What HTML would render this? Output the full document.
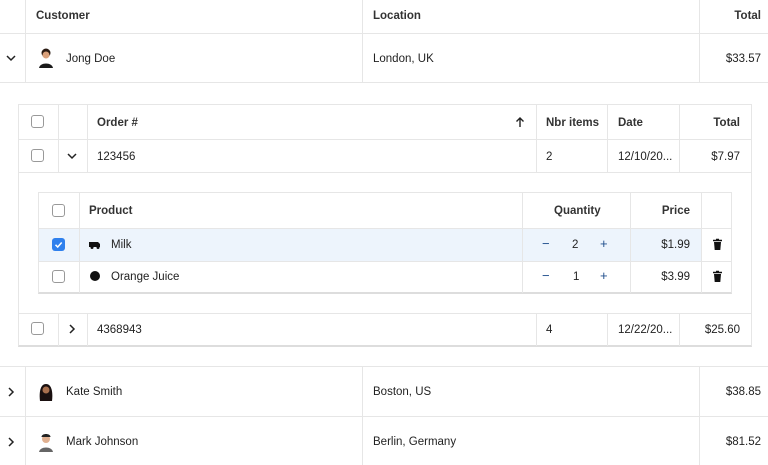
<!DOCTYPE html>
<html><head><style>
*{box-sizing:border-box;margin:0;padding:0}
body{width:768px;height:465px;overflow:hidden;background:#fff;font-family:"Liberation Sans",sans-serif;font-size:11.5px;color:#222;position:relative}
.a{position:absolute}
.h{position:absolute;background:#e6e6e6;height:1px}
.v{position:absolute;background:#e6e6e6;width:1px}
.t{position:absolute;white-space:nowrap;line-height:14px;margin-top:1px}
.b{font-weight:bold;color:#333}
.cb{position:absolute;width:13px;height:13px;border:1px solid #999;border-radius:3px;background:#fff}
.r{text-align:right}
.q{color:#1f4e8c;font-size:13px}
</style></head><body>
<div class="h" style="left:0;top:33px;width:768px"></div>
<div class="v" style="left:25px;top:0;height:82px"></div>
<div class="v" style="left:362px;top:0;height:82px"></div>
<div class="v" style="left:699px;top:0;height:82px"></div>
<div class="t b" style="left:36px;top:8px">Customer</div>
<div class="t b" style="left:373px;top:8px">Location</div>
<div class="t b r" style="right:7px;top:8px">Total</div>
<svg class="a" style="left:5px;top:53px" width="12" height="10"><path d="M2 3l4 4 4-4" stroke="#222" stroke-width="1.5" fill="none"/></svg>
<svg class="a" style="left:37px;top:47px" width="18" height="22"><circle cx="9" cy="6" r="4.5" fill="#2a1a12"/><circle cx="9" cy="8" r="3.5" fill="#d9a07a"/><path d="M2 21c1-6 13-6 14 0z" fill="#1a1a1a"/></svg>
<div class="t" style="left:66px;top:51px">Jong Doe</div>
<div class="t" style="left:373px;top:51px">London, UK</div>
<div class="t r" style="right:7px;top:51px">$33.57</div>
<div class="h" style="left:0;top:82px;width:768px"></div>
<div class="a" style="left:18px;top:104px;width:734px;height:243px;border:1px solid #e6e6e6;border-bottom:2px solid #ddd"></div>
<div class="h" style="left:18px;top:139px;width:734px"></div>
<div class="h" style="left:18px;top:172px;width:734px"></div>
<div class="h" style="left:18px;top:313px;width:734px"></div>
<div class="v" style="left:58px;top:104px;height:68px"></div>
<div class="v" style="left:87px;top:104px;height:68px"></div>
<div class="v" style="left:536px;top:104px;height:68px"></div>
<div class="v" style="left:607px;top:104px;height:68px"></div>
<div class="v" style="left:679px;top:104px;height:68px"></div>
<div class="v" style="left:58px;top:313px;height:33px"></div>
<div class="v" style="left:87px;top:313px;height:33px"></div>
<div class="v" style="left:536px;top:313px;height:33px"></div>
<div class="v" style="left:607px;top:313px;height:33px"></div>
<div class="v" style="left:679px;top:313px;height:33px"></div>
<div class="cb" style="left:31px;top:115px"></div>
<div class="t b" style="left:97px;top:115px">Order #</div>
<svg class="a" style="left:515px;top:116px" width="10" height="12"><path d="M5 11V2M1.5 5.5L5 2l3.5 3.5" stroke="#222" stroke-width="1.4" fill="none"/></svg>
<div class="t b" style="left:546px;top:115px">Nbr items</div>
<div class="t b" style="left:618px;top:115px">Date</div>
<div class="t b r" style="right:28px;top:115px">Total</div>
<div class="cb" style="left:31px;top:149px"></div>
<svg class="a" style="left:66px;top:151px" width="12" height="10"><path d="M2 3l4 4 4-4" stroke="#222" stroke-width="1.5" fill="none"/></svg>
<div class="t" style="left:97px;top:149px">123456</div>
<div class="t" style="left:546px;top:149px">2</div>
<div class="t" style="left:618px;top:149px">12/10/20...</div>
<div class="t r" style="right:28px;top:149px">$7.97</div>
<div class="cb" style="left:31px;top:322px"></div>
<svg class="a" style="left:67px;top:323px" width="10" height="12"><path d="M3 2l4 4-4 4" stroke="#222" stroke-width="1.5" fill="none"/></svg>
<div class="t" style="left:97px;top:322px">4368943</div>
<div class="t" style="left:546px;top:322px">4</div>
<div class="t" style="left:618px;top:322px">12/22/20...</div>
<div class="t r" style="right:28px;top:322px">$25.60</div>
<div class="a" style="left:38px;top:228px;width:664px;height:33px;background:#edf4fc"></div>
<div class="a" style="left:38px;top:192px;width:694px;height:102px;border:1px solid #e6e6e6;border-bottom:2px solid #ddd"></div>
<div class="h" style="left:38px;top:228px;width:694px"></div>
<div class="h" style="left:38px;top:261px;width:694px"></div>
<div class="v" style="left:79px;top:192px;height:101px"></div>
<div class="v" style="left:522px;top:192px;height:101px"></div>
<div class="v" style="left:630px;top:192px;height:101px"></div>
<div class="v" style="left:701px;top:192px;height:101px"></div>
<div class="cb" style="left:52px;top:204px"></div>
<div class="t b" style="left:89px;top:203px">Product</div>
<div class="t b" style="left:554px;top:203px">Quantity</div>
<div class="t b r" style="right:78px;top:203px">Price</div>
<div class="a" style="left:52px;top:238px;width:13px;height:13px;border-radius:3px;background:#2f80ed"></div>
<svg class="a" style="left:52px;top:238px" width="13" height="13"><path d="M3.5 6.8l2.2 2.2 4-4.5" stroke="#fff" stroke-width="1.5" fill="none"/></svg>
<svg class="a" style="left:88px;top:239px" width="14" height="10"><path d="M1 3h9l2 2v3H1z" fill="#111"/><circle cx="4" cy="8.5" r="1.5" fill="#111"/><circle cx="10" cy="8.5" r="1.5" fill="#111"/></svg>
<div class="t" style="left:111px;top:237px">Milk</div>
<div class="t q" style="left:542px;top:236px">−</div>
<div class="t" style="left:572px;top:237px">2</div>
<div class="t q" style="left:600px;top:236px">+</div>
<div class="t r" style="right:78px;top:237px">$1.99</div>
<svg class="a" style="left:712px;top:238px" width="11" height="13"><path d="M1 2.5h9M4 1.5h3" stroke="#111" stroke-width="1.5"/><path d="M2 4h7l-.7 8H2.7z" fill="#111"/></svg>
<div class="cb" style="left:52px;top:270px"></div>
<div class="a" style="left:90px;top:271px;width:10px;height:10px;border-radius:50%;background:#111"></div>
<div class="t" style="left:111px;top:269px">Orange Juice</div>
<div class="t q" style="left:542px;top:268px">−</div>
<div class="t" style="left:573px;top:269px">1</div>
<div class="t q" style="left:600px;top:268px">+</div>
<div class="t r" style="right:78px;top:269px">$3.99</div>
<svg class="a" style="left:712px;top:270px" width="11" height="13"><path d="M1 2.5h9M4 1.5h3" stroke="#111" stroke-width="1.5"/><path d="M2 4h7l-.7 8H2.7z" fill="#111"/></svg>
<div class="h" style="left:0;top:366px;width:768px"></div>
<div class="h" style="left:0;top:416px;width:768px"></div>
<div class="v" style="left:25px;top:366px;height:99px"></div>
<div class="v" style="left:362px;top:366px;height:99px"></div>
<div class="v" style="left:699px;top:366px;height:99px"></div>
<svg class="a" style="left:6px;top:386px" width="10" height="12"><path d="M3 2l4 4-4 4" stroke="#222" stroke-width="1.5" fill="none"/></svg>
<svg class="a" style="left:37px;top:381px" width="18" height="22"><path d="M3 20c-1-8 0-17 6-17s7 9 6 17z" fill="#1a1010"/><circle cx="9" cy="9" r="3.5" fill="#a8704e"/></svg>
<div class="t" style="left:66px;top:384px">Kate Smith</div>
<div class="t" style="left:373px;top:384px">Boston, US</div>
<div class="t r" style="right:7px;top:384px">$38.85</div>
<svg class="a" style="left:6px;top:436px" width="10" height="12"><path d="M3 2l4 4-4 4" stroke="#222" stroke-width="1.5" fill="none"/></svg>
<svg class="a" style="left:37px;top:431px" width="18" height="22"><circle cx="9" cy="8" r="4" fill="#e0b090"/><path d="M4.5 6c0-4 9-4 9 0z" fill="#222"/><path d="M2 21c1-6 13-6 14 0z" fill="#666"/></svg>
<div class="t" style="left:66px;top:434px">Mark Johnson</div>
<div class="t" style="left:373px;top:434px">Berlin, Germany</div>
<div class="t r" style="right:7px;top:434px">$81.52</div>
</body></html>
